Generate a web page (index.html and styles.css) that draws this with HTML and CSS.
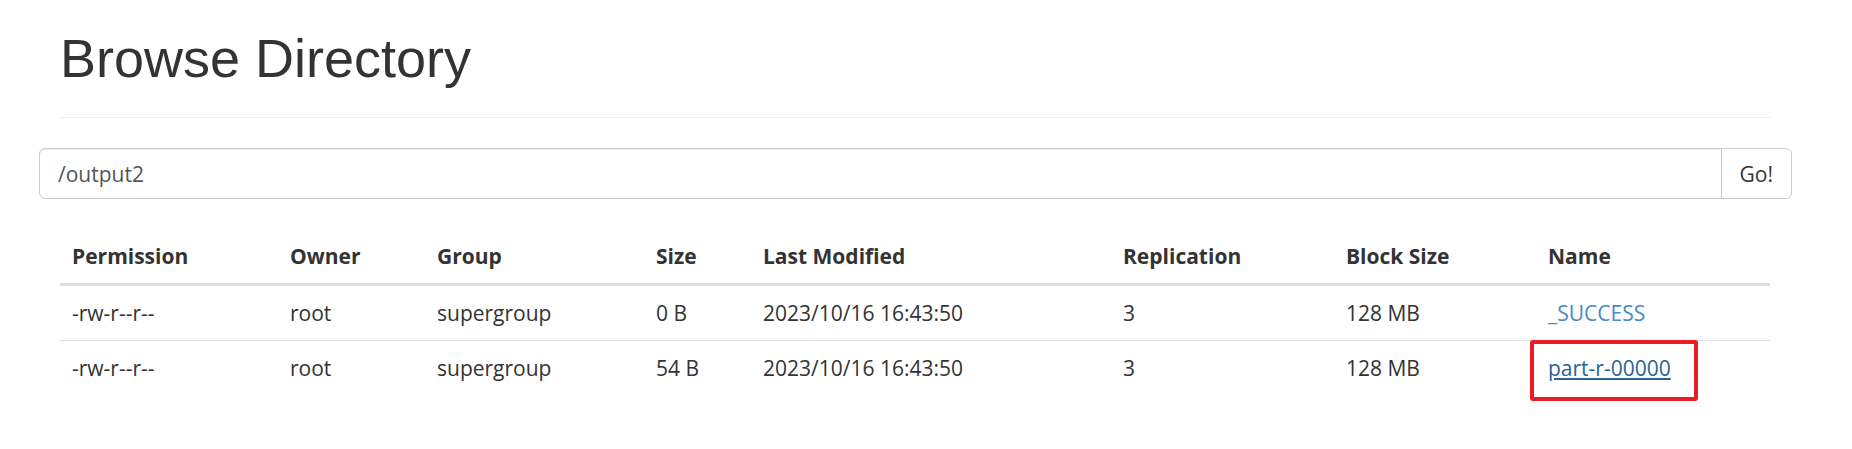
FILE: index.html
```html
<!DOCTYPE html>
<html>
<head>
<meta charset="utf-8">
<title>Browse Directory</title>
<link rel="stylesheet" href="styles.css">
</head>
<body>
<div class="container">
  <div class="page-header"><h1>Browse Directory</h1></div>
  <div class="input-group">
    <input type="text" class="form-control" value="/output2">
    <button class="btn" type="button">Go!</button>
  </div>
  <table class="table">
    <thead>
      <tr>
        <th class="c-perm">Permission</th>
        <th class="c-owner">Owner</th>
        <th class="c-group">Group</th>
        <th class="c-size">Size</th>
        <th class="c-mod">Last Modified</th>
        <th class="c-rep">Replication</th>
        <th class="c-block">Block Size</th>
        <th class="c-name">Name</th>
      </tr>
    </thead>
    <tbody>
      <tr>
        <td>-rw-r--r--</td>
        <td>root</td>
        <td>supergroup</td>
        <td>0 B</td>
        <td>2023/10/16 16:43:50</td>
        <td>3</td>
        <td>128 MB</td>
        <td><a class="link" href="#">_SUCCESS</a></td>
      </tr>
      <tr>
        <td>-rw-r--r--</td>
        <td>root</td>
        <td>supergroup</td>
        <td>54 B</td>
        <td>2023/10/16 16:43:50</td>
        <td>3</td>
        <td>128 MB</td>
        <td><span class="mark-wrap"><a class="link link-hover" href="#">part-r-00000</a><span class="highlight"></span></span></td>
      </tr>
    </tbody>
  </table>
</div>
</body>
</html>
```
FILE: styles.css
```css
html, body {
  margin: 0;
  padding: 0;
  background: #fff;
}

body {
  font-family: "Open Sans", "Noto Sans", sans-serif;
  font-size: 21px;
  line-height: 30px;
  color: #333;
  min-height: 449px;
}

.container {
  width: 1710px;
  margin-left: 60px;
}

.page-header {
  margin: 0 0 30px;
  padding-bottom: 14px;
  border-bottom: 1px solid #eee;
}

.page-header h1 {
  margin: 29px 0 15px;
  font-family: "Liberation Sans", Arial, sans-serif;
  font-size: 54px;
  line-height: 59px;
  font-weight: 500;
  color: #333;
}

.input-group {
  display: flex;
  margin: 0 -22px 30px -21px;
  height: 51px;
}

.form-control {
  flex: 1;
  box-sizing: border-box;
  height: 51px;
  margin: 0;
  padding: 9px 18px;
  font-family: inherit;
  font-size: 21px;
  line-height: 30px;
  color: #555;
  background: #fff;
  border: 1px solid #ccc;
  border-radius: 6px 0 0 6px;
  box-shadow: inset 0 1px 1px rgba(0, 0, 0, 0.075);
  outline: none;
}

.btn {
  box-sizing: border-box;
  height: 51px;
  margin-left: -1px;
  padding: 9px 18px;
  font-family: inherit;
  font-size: 21px;
  line-height: 30px;
  color: #333;
  background: #fff;
  border: 1px solid #ccc;
  border-radius: 0 6px 6px 0;
}

.table {
  width: 1710px;
  table-layout: fixed;
  border-collapse: separate;
  border-spacing: 0;
  margin-bottom: 30px;
}

.table th,
.table td {
  box-sizing: border-box;
  padding: 12px 12px;
  text-align: left;
  vertical-align: top;
  line-height: 30px;
  white-space: nowrap;
}

.table th {
  font-weight: 700;
  border-bottom: 3px solid #ddd;
}

.table tbody tr + tr td {
  border-top: 1px solid #ddd;
}

.c-perm { width: 218px; }
.c-owner { width: 147px; }
.c-group { width: 219px; }
.c-size { width: 107px; }
.c-mod { width: 360px; }
.c-rep { width: 223px; }
.c-block { width: 202px; }
.c-name { width: 234px; }

.link {
  color: #428bca;
  text-decoration: none;
}

.link-hover {
  color: #2a6496;
  text-decoration: underline;
}

.mark-wrap {
  position: relative;
  display: inline-block;
}

.highlight {
  position: absolute;
  left: -18px;
  top: -13px;
  width: 168px;
  height: 61px;
  box-sizing: border-box;
  border: 4px solid #ed1c24;
  border-radius: 3px;
}
```
